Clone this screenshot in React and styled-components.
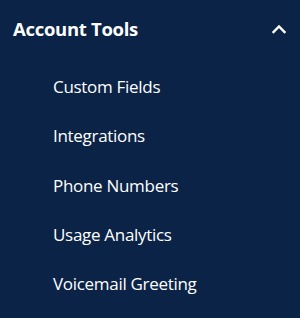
import styled, { createGlobalStyle } from "styled-components";

const Global = createGlobalStyle`
  html, body {
    margin: 0;
    padding: 0;
    background: #0a2346;
  }
`;

const items = [
  "Custom Fields",
  "Integrations",
  "Phone Numbers",
  "Usage Analytics",
  "Voicemail Greeting",
];

export default function App() {
  return (
    <>
      <Global />
      <Panel>
        <Header>
          <Title>Account Tools</Title>
          <Chevron viewBox="0 0 16 10">
            <path d="M2.5 8 L8 2.5 L13.5 8" />
          </Chevron>
        </Header>
        <List>
          {items.map((item) => (
            <Item key={item}>{item}</Item>
          ))}
        </List>
      </Panel>
    </>
  );
}

const Panel = styled.nav`
  width: 300px;
  height: 318px;
  background: #0a2346;
  color: #ffffff;
  font-family: "Open Sans", "Liberation Sans", sans-serif;
  display: flex;
  flex-direction: column;
`;

const Header = styled.div`
  height: 57px;
  display: flex;
  align-items: center;
  justify-content: space-between;
  padding: 0 13px 0 13px;
`;

const Title = styled.span`
  font-size: 18.5px;
  font-weight: 700;
  letter-spacing: -0.3px;
`;

const Chevron = styled.svg`
  width: 16px;
  height: 10px;
  fill: none;
  stroke: #ffffff;
  stroke-width: 2.4;
  stroke-linecap: square;
`;

const List = styled.ul`
  list-style: none;
  margin: 0;
  padding: 5px 0 0 53px;
`;

const Item = styled.li`
  height: 49.3px;
  line-height: 49.3px;
  font-size: 17px;
  letter-spacing: -0.3px;
`;
